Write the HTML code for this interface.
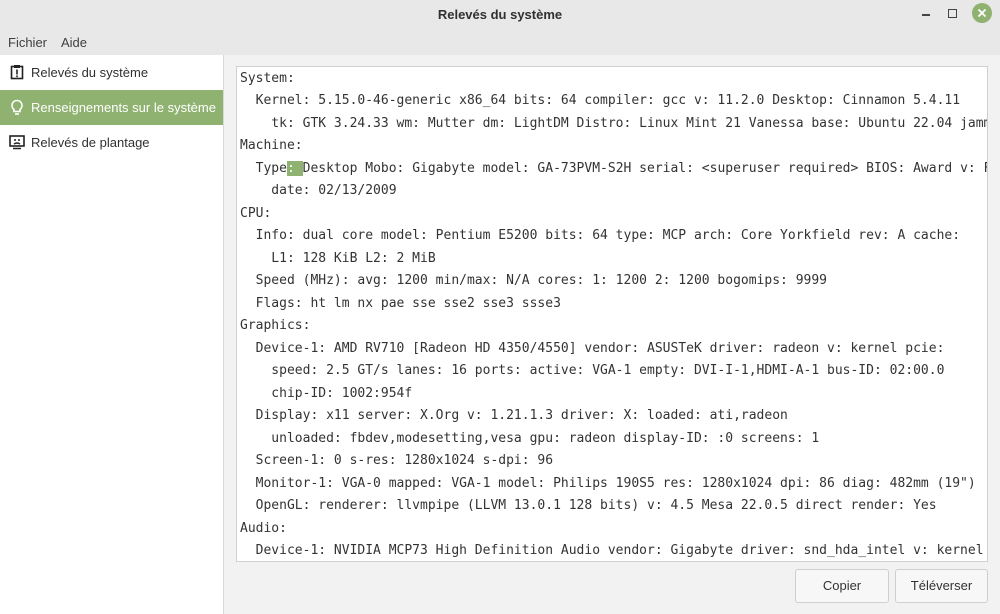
<!DOCTYPE html><html><head><meta charset="utf-8"><style>
body{margin:0;width:1000px;height:614px;background:#f2f2f2;font-family:"Liberation Sans",sans-serif;overflow:hidden;position:relative}
.title{position:absolute;left:0;top:0;width:1000px;height:30px;background:#e8e8e8;text-align:center;line-height:29px;font-size:13px;font-weight:bold;color:#303030}
.menu{position:absolute;top:30px;left:0;width:1000px;height:25px;background:#e8e8e8;font-size:13px;color:#404040}
.menu span{position:absolute;top:5px}
.side{position:absolute;left:0;top:55px;width:223px;height:559px;background:#fff;border-right:1px solid #d8d8d8}
.item{height:35px;line-height:35px;font-size:13px;color:#303030;padding-left:31px;position:relative}
.item.sel{background:#8fb270;color:#fff}
.item svg{position:absolute;left:9px;top:9px}
.text{position:absolute;left:236px;top:66px;width:750px;height:494px;background:#fff;border:1px solid #d0d0d0;overflow:hidden}
pre{margin:0;padding:0 0 0 3px;font-family:"DejaVu Sans Mono",monospace;font-size:13px;line-height:22.48px;color:#333;position:relative;top:1px;white-space:pre}
.hl{background:#8fb270;color:#fff}
.btn{position:absolute;top:569px;height:32px;border:1px solid #cfcfcf;border-radius:3px;background:#f7f7f7;font-size:13px;color:#333;text-align:center;line-height:32px}
</style></head><body>
<div class="title">Relevés du système</div>
<div style="position:absolute;left:922px;top:14px;width:8px;height:1.5px;background:#444"></div>
<div style="position:absolute;left:948px;top:9px;width:7px;height:7px;border:1.5px solid #444"></div>
<div style="position:absolute;left:972px;top:3px;width:20px;height:20px;border-radius:50%;background:#8fb270"></div>
<svg style="position:absolute;left:972px;top:3px" width="20" height="20"><path d="M6.5 6.5L13.5 13.5M13.5 6.5L6.5 13.5" stroke="#fff" stroke-width="1.8"/></svg>
<div class="menu"><span style="left:8px">Fichier</span><span style="left:61px">Aide</span></div>
<div class="side">
<div class="item"><svg width="16" height="16"><rect x="2.5" y="2.5" width="11" height="12" fill="none" stroke="#222" stroke-width="1.6"/><rect x="5" y="1" width="6" height="3" fill="#222"/><rect x="7.2" y="5.5" width="1.6" height="5" fill="#222"/><rect x="7.2" y="11.5" width="1.6" height="1.6" fill="#222"/></svg>Relevés du système</div>
<div class="item sel"><svg width="16" height="17"><path d="M8 1.5a5 5 0 0 0-3 9v2h6v-2a5 5 0 0 0-3-9z" fill="none" stroke="#fff" stroke-width="1.6"/><path d="M6 15h4" stroke="#fff" stroke-width="1.6"/></svg>Renseignements sur le système</div>
<div class="item"><svg width="16" height="16"><rect x="1" y="2" width="14" height="10" fill="none" stroke="#222" stroke-width="1.6"/><path d="M4 14.5h8M5 6h2M9 6h2M5 10q3-2 6 0" stroke="#222" stroke-width="1.4" fill="none"/></svg>Relevés de plantage</div>
</div>
<div class="text"><pre>System:
  Kernel: 5.15.0-46-generic x86_64 bits: 64 compiler: gcc v: 11.2.0 Desktop: Cinnamon 5.4.11
    tk: GTK 3.24.33 wm: Mutter dm: LightDM Distro: Linux Mint 21 Vanessa base: Ubuntu 22.04 jammy
Machine:
  Type<span class="hl">: </span>Desktop Mobo: Gigabyte model: GA-73PVM-S2H serial: &lt;superuser required&gt; BIOS: Award v: F
    date: 02/13/2009
CPU:
  Info: dual core model: Pentium E5200 bits: 64 type: MCP arch: Core Yorkfield rev: A cache:
    L1: 128 KiB L2: 2 MiB
  Speed (MHz): avg: 1200 min/max: N/A cores: 1: 1200 2: 1200 bogomips: 9999
  Flags: ht lm nx pae sse sse2 sse3 ssse3
Graphics:
  Device-1: AMD RV710 [Radeon HD 4350/4550] vendor: ASUSTeK driver: radeon v: kernel pcie:
    speed: 2.5 GT/s lanes: 16 ports: active: VGA-1 empty: DVI-I-1,HDMI-A-1 bus-ID: 02:00.0
    chip-ID: 1002:954f
  Display: x11 server: X.Org v: 1.21.1.3 driver: X: loaded: ati,radeon
    unloaded: fbdev,modesetting,vesa gpu: radeon display-ID: :0 screens: 1
  Screen-1: 0 s-res: 1280x1024 s-dpi: 96
  Monitor-1: VGA-0 mapped: VGA-1 model: Philips 190S5 res: 1280x1024 dpi: 86 diag: 482mm (19")
  OpenGL: renderer: llvmpipe (LLVM 13.0.1 128 bits) v: 4.5 Mesa 22.0.5 direct render: Yes
Audio:
  Device-1: NVIDIA MCP73 High Definition Audio vendor: Gigabyte driver: snd_hda_intel v: kernel</pre></div>
<div class="btn" style="left:795px;width:92px">Copier</div>
<div class="btn" style="left:895px;width:91px">Téléverser</div>
</body></html>
